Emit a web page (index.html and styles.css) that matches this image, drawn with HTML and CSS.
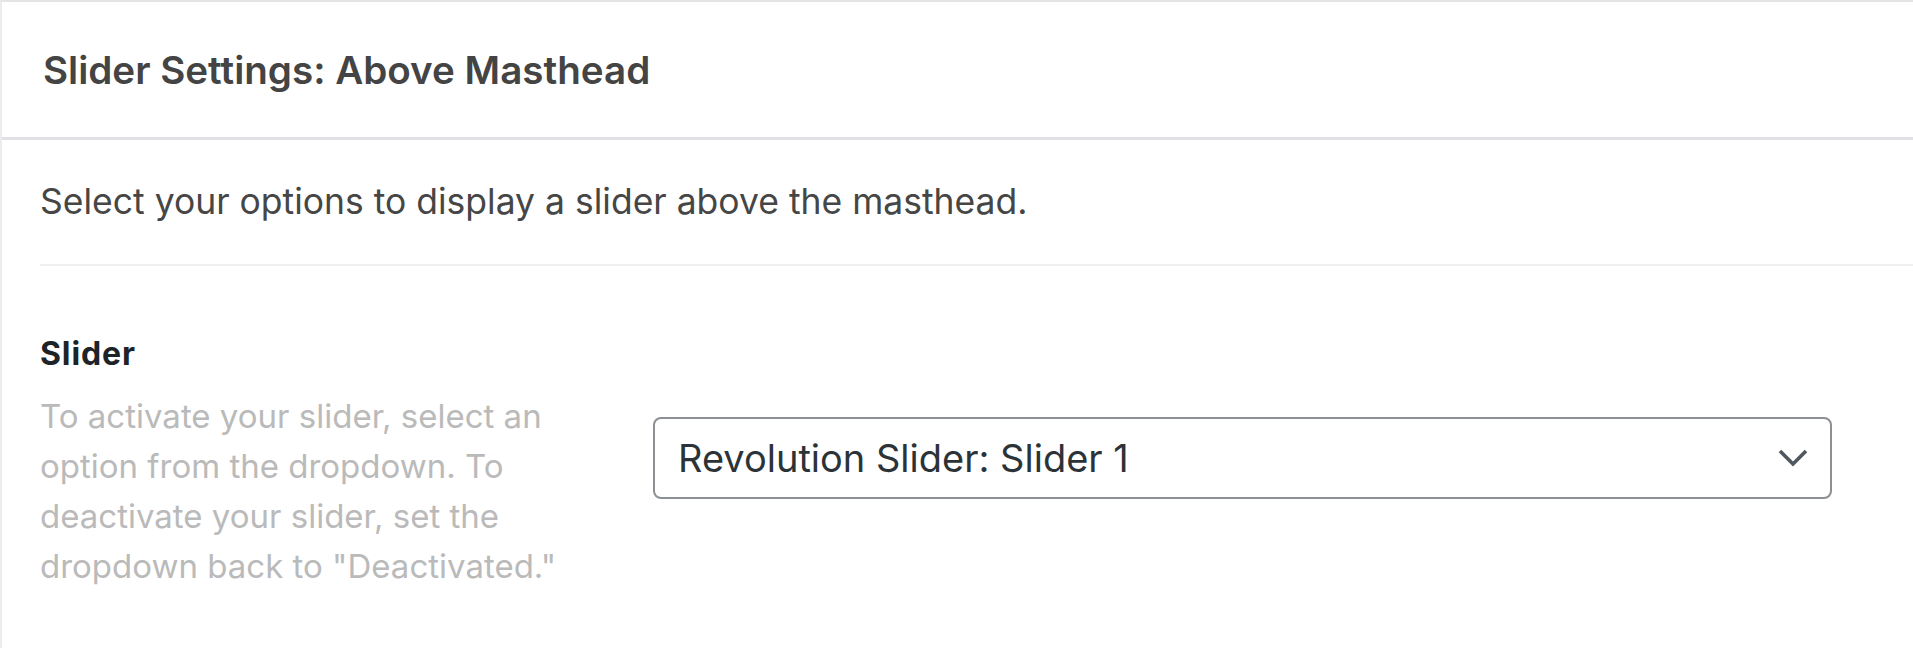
FILE: index.html
```html
<!DOCTYPE html>
<html lang="en">
<head>
    <meta charset="UTF-8">
    <meta name="viewport" content="width=device-width, initial-scale=1.0">
    <link rel="stylesheet" href="styles.css">
</head>
<body>
    <section class="panel">
        <header class="panel-header">
            <h2 class="panel-title">Slider Settings: Above Masthead</h2>
        </header>

        <div class="panel-body">
            <p class="panel-intro">Select your options to display a slider above the masthead.</p>

            <div class="field-row">
                <div class="field-info">
                    <label class="field-label" for="slider">Slider</label>
                    <p class="field-help">To activate your slider, select an option from the dropdown. To deactivate your slider, set the dropdown back to "Deactivated."</p>
                </div>
                <div class="field-control">
                    <div class="select-wrap">
                        <select id="slider" class="select">
                            <option>Deactivated</option>
                            <option selected>Revolution Slider: Slider 1</option>
                        </select>
                        <svg class="select-arrow" width="30" height="18" viewBox="0 0 30 18">
                            <polyline points="2,2 15,15 28,2" fill="none" stroke="#50575e" stroke-width="3.6"/>
                        </svg>
                    </div>
                </div>
            </div>
        </div>
    </section>
</body>
</html>
```

FILE: styles.css
```css
* {
    margin: 0;
    padding: 0;
    box-sizing: border-box;
}

body {
    font-family: Inter, "Noto Sans", sans-serif;
    background-color: white;
    overflow: hidden;
}

.panel {
    border-top: 2px solid #e4e4e7;
    border-left: 2px solid #ececec;
    min-height: 100vh;
}

.panel-header {
    height: 138px;
    display: flex;
    align-items: center;
    padding-left: 41px;
    border-bottom: 3px solid #e0e0e6;
}

.panel-title {
    font-size: 38.6px;
    font-weight: 600;
    color: #444;
}

.panel-body {
    padding-left: 38px;
}

.panel-intro {
    font-size: 35.5px;
    line-height: 49px;
    color: #464646;
    padding: 37px 0 38px;
}

.field-row {
    display: flex;
    align-items: flex-start;
    border-top: 2px solid #f0f0f1;
    padding: 68px 81px 0 0;
}

.field-info {
    width: 580px;
    flex-shrink: 0;
}

.field-label {
    display: block;
    font-size: 32px;
    font-weight: 700;
    letter-spacing: 0.9px;
    line-height: 40px;
    color: #1d2327;
}

.field-help {
    margin-top: 17px;
    font-size: 33px;
    line-height: 50px;
    color: #bababa;
}

.field-control {
    flex: 1;
    padding: 83px 0 0 33px;
}

.select-wrap {
    position: relative;
}

.select {
    appearance: none;
    -webkit-appearance: none;
    width: 100%;
    height: 82px;
    padding: 0 80px 0 23px;
    border: 2px solid #8c8f94;
    border-radius: 8px;
    background-color: white;
    font-family: Inter, "Noto Sans", sans-serif;
    font-size: 38px;
    color: #2c3338;
    outline: none;
}

.select-arrow {
    position: absolute;
    right: 24px;
    top: 32px;
    pointer-events: none;
}
```
